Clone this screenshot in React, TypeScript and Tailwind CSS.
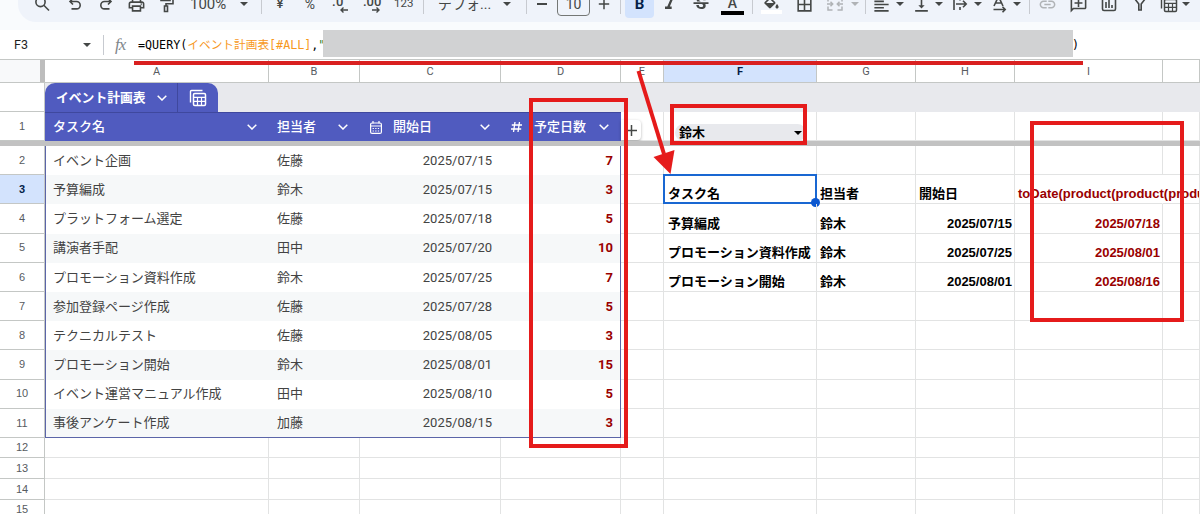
import type { ReactNode } from "react"
import clsx from "clsx"
import {
  MdBorderAll,
  MdFormatAlignLeft,
  MdFormatColorFill,
  MdFormatItalic,
  MdLink,
  MdOutlineAddComment,
  MdOutlinePrint,
  MdStrikethroughS,
  MdVerticalAlignBottom,
} from "react-icons/md"

interface Task {
  name: string
  owner: string
  start: string
  days: number
}

interface Result {
  name: string
  owner: string
  start: string
  end: string
}

const tasks: Task[] = [
  { name: "イベント企画", owner: "佐藤", start: "2025/07/15", days: 7 },
  { name: "予算編成", owner: "鈴木", start: "2025/07/15", days: 3 },
  { name: "プラットフォーム選定", owner: "佐藤", start: "2025/07/18", days: 5 },
  { name: "講演者手配", owner: "田中", start: "2025/07/20", days: 10 },
  { name: "プロモーション資料作成", owner: "鈴木", start: "2025/07/25", days: 7 },
  { name: "参加登録ページ作成", owner: "佐藤", start: "2025/07/28", days: 5 },
  { name: "テクニカルテスト", owner: "佐藤", start: "2025/08/05", days: 3 },
  { name: "プロモーション開始", owner: "鈴木", start: "2025/08/01", days: 15 },
  { name: "イベント運営マニュアル作成", owner: "田中", start: "2025/08/10", days: 5 },
  { name: "事後アンケート作成", owner: "加藤", start: "2025/08/15", days: 3 },
]

// keyed by sheet row number
const results: Record<number, Result> = {
  3: { name: "タスク名", owner: "担当者", start: "開始日", end: "toDate(product(product(product(" },
  4: { name: "予算編成", owner: "鈴木", start: "2025/07/15", end: "2025/07/18" },
  5: { name: "プロモーション資料作成", owner: "鈴木", start: "2025/07/25", end: "2025/08/01" },
  6: { name: "プロモーション開始", owner: "鈴木", start: "2025/08/01", end: "2025/08/16" },
}

const columns = [
  { id: "A", width: "w-[224px]" },
  { id: "B", width: "w-[91px]" },
  { id: "C", width: "w-[141px]" },
  { id: "D", width: "w-[120px]" },
  { id: "E", width: "w-[43px]" },
  { id: "F", width: "w-[153px]" },
  { id: "G", width: "w-[99px]" },
  { id: "H", width: "w-[99px]" },
  { id: "I", width: "w-[148px]" },
  { id: "", width: "w-[37px]" },
]

const tableFont = "font-['Roboto','Noto_Sans_CJK_JP',sans-serif]"
const sheetFont = "font-['Liberation_Sans','Noto_Sans_CJK_JP',sans-serif]"

function Icon({ className, children }: { className?: string; children: ReactNode }) {
  return (
    <svg
      viewBox="0 0 18 18"
      fill="none"
      stroke="currentColor"
      strokeWidth="1.6"
      className={clsx("size-[18px] shrink-0", className)}
    >
      {children}
    </svg>
  )
}

function Caret({ className }: { className?: string }) {
  return (
    <svg viewBox="0 0 8 4" fill="currentColor" className={clsx("h-1 w-2 shrink-0", className)}>
      <path d="M0 0h8L4 4z" />
    </svg>
  )
}

function Divider({ className }: { className?: string }) {
  return <div className={clsx("h-5 w-px shrink-0 bg-[#c7cad0]", className)} />
}

function Chevron({ className }: { className?: string }) {
  return (
    <svg viewBox="0 0 10 6" fill="none" stroke="currentColor" strokeWidth="1.5" className={clsx("h-1.5 w-2.5 shrink-0", className)}>
      <path d="M.7.7 5 5 9.3.7" />
    </svg>
  )
}

function TableIcon({ className }: { className?: string }) {
  return (
    <Icon className={className}>
      <path strokeWidth="1.4" d="M1.5 13.5v-11a1 1 0 0 1 1-1h11" />
      <rect strokeWidth="1.5" x="4.5" y="4.5" width="12" height="12" rx="1.2" />
      <path strokeWidth="1.2" d="M4.5 8.3h12M4.5 12.3h12M8.5 8.3v8.2M12.5 8.3v8.2" />
    </Icon>
  )
}

function Toolbar() {
  return (
    <div className="-mt-[14px] ml-[18px] flex h-9 shrink-0 items-center rounded-bl-[18px] bg-[#eff3fa] text-[#444746]">
      <Icon className="ml-[15px]">
        <circle cx="7.500" cy="7" r="4.600" />
        <path d="m10.800 10.300 5.200 5.200" />
      </Icon>
      <Icon className="ml-[15px]">
        <path d="M7 3.500 4 6.500l3 3M4.300 6.500h6.200a3.700 3.700 0 0 1 0 7.400H5.500" />
      </Icon>
      <Icon className="ml-[13px]">
        <path d="m11 3.500 3 3-3 3M13.700 6.500H7.500a3.700 3.700 0 0 0 0 7.400h5" />
      </Icon>
      <MdOutlinePrint className="ml-[12px] size-[19px] shrink-0" />
      <Icon className="ml-[11px]">
        <path d="M4 1.500h9v4H4zM13 3.500h3v5.200H9V11M7.500 11h3v5.500h-3z" />
      </Icon>
      <span className="ml-[15px] w-[38px] shrink-0 whitespace-nowrap font-['Roboto',sans-serif] text-[15px]">100%</span>
      <Caret className="ml-[12px]" />
      <Divider className="ml-[13px]" />
      <span className="ml-[9px] w-[18px] shrink-0 text-center font-['Roboto','Noto_Sans_CJK_JP',sans-serif] text-[13px] font-medium">¥</span>
      <span className="ml-[12px] w-[18px] shrink-0 text-center font-['Roboto',sans-serif] text-[14px]">%</span>
      <div className="ml-[13px] flex w-[18px] shrink-0 flex-col font-['Roboto',sans-serif] text-[13px] leading-[12px] font-medium tracking-[.5px]">
        <span>.0</span>
        <svg viewBox="0 0 8 6" fill="none" stroke="currentColor" strokeWidth="1.4" className="-mt-px ml-2 h-1.5 w-2">
          <path d="M8 3H1M3.500.5 1 3l2.500 2.500" />
        </svg>
      </div>
      <div className="ml-[13px] flex w-[20px] shrink-0 flex-col font-['Roboto',sans-serif] text-[13px] leading-[12px] font-medium">
        <span>.00</span>
        <svg viewBox="0 0 8 6" fill="none" stroke="currentColor" strokeWidth="1.4" className="-mt-px ml-[9px] h-1.5 w-2">
          <path d="M0 3h7M4.500.5 7 3 4.500 5.500" />
        </svg>
      </div>
      <span className="ml-[11px] w-[19px] shrink-0 font-['Roboto',sans-serif] text-[11.500px]">123</span>
      <Divider className="ml-[10px]" />
      <span className="ml-[14px] w-[54px] shrink-0 whitespace-nowrap font-['Roboto','Noto_Sans_CJK_JP',sans-serif] text-[14px]">デフォ...</span>
      <Caret className="ml-[11px]" />
      <Divider className="ml-[15px]" />
      <div className="ml-[10px] h-[1.5px] w-2.5 shrink-0 bg-[#444746]" />
      <div className="ml-[10px] flex h-6 w-[33px] shrink-0 items-center justify-center rounded border border-[#747775] font-['Roboto',sans-serif] text-[14px]">
        10
      </div>
      <svg viewBox="0 0 12 12" stroke="currentColor" strokeWidth="1.5" className="ml-[8px] size-3 shrink-0">
        <path d="M6 .8v10.400M.8 6h10.400" />
      </svg>
      <Divider className="ml-[10px]" />
      <div className="ml-[4px] flex h-7 w-[29px] shrink-0 items-center justify-center rounded bg-[#d3e3fd] font-['Roboto',sans-serif] text-[15px] font-bold text-[#041e49]">
        B
      </div>
      <MdFormatItalic className="ml-[6px] size-[20px] shrink-0" />
      <MdStrikethroughS className="ml-[11px] size-[20px] shrink-0" />
      <div className="mt-[3px] ml-[10px] flex w-[23px] shrink-0 flex-col items-center font-['Roboto',sans-serif] text-[14px] leading-[14px] font-medium">
        A
        <div className="mt-px h-1 w-full bg-black" />
      </div>
      <Divider className="ml-[8px]" />
      <div className="ml-[8px] flex w-[21px] shrink-0 flex-col items-center">
        <MdFormatColorFill className="-mb-[4px] size-[19px]" />
        <div className="h-1 w-full bg-white" />
      </div>
      <MdBorderAll className="ml-[13px] size-[19px] shrink-0" />
      <Icon className="ml-[12px] text-[#b0b3b6]">
        <path strokeWidth="1.5" d="M6.500 3H2v3.500M11.500 3H16v3.500M6.500 15H2v-3.500M11.500 15H16v-3.500M1 9h5.500M4.500 6.800 6.700 9l-2.200 2.200M17 9h-5.500M13.500 6.800 11.300 9l2.200 2.200" />
      </Icon>
      <Caret className="ml-[7px] text-[#b0b3b6]" />
      <Divider className="ml-[6px]" />
      <MdFormatAlignLeft className="ml-[6px] size-[19px] shrink-0" />
      <Caret className="ml-[5px]" />
      <MdVerticalAlignBottom className="ml-[8px] size-[19px] shrink-0" />
      <Caret className="ml-[4px]" />
      <Icon className="ml-[8px]">
        <path d="M3 2v13M9 2v3.500M9 12v3M5 9h10M12 5.800 15.200 9 12 12.200" />
      </Icon>
      <Caret className="ml-[5px]" />
      <Icon className="ml-[9px]">
        <path d="M3 11 7.500 1.500 12 11M4.500 8h6M2.500 14.500h11M11.500 11.800l2.700 2.700-2.700 2.700" />
      </Icon>
      <Caret className="ml-[4px]" />
      <Divider className="ml-[8px]" />
      <MdLink className="ml-[8px] size-[19px] shrink-0 text-[#b0b3b6]" />
      <MdOutlineAddComment className="ml-[12px] size-[19px] shrink-0 -scale-x-100" />
      <Icon className="ml-[12px]">
        <rect x="2.500" y="2.500" width="13" height="13" rx="1.500" />
        <path d="M6 7v6M9 5v8M12 10v3" />
      </Icon>
      <Icon className="ml-[13px]">
        <path d="M3 2.800h12L10.200 9v6H7.800V9z" />
      </Icon>
      <TableIcon className="ml-[11px]" />
      <Caret className="ml-[4px]" />
    </div>
  )
}

function FormulaBar() {
  return (
    <div className="mt-2 flex h-[30px] shrink-0 items-center border-b border-[#c4c7c5] bg-white">
      <span className="mt-px ml-[14px] w-[69px] font-['Roboto',sans-serif] text-[12.500px] text-[#1f1f1f]">F3</span>
      <Caret className="text-[#444746]" />
      <Divider className="ml-[12px] h-4" />
      <span className="mt-px ml-[11px] w-[23px] font-['Liberation_Serif',serif] text-[17px] tracking-[-1px] text-[#80868b] italic">fx</span>
      <div className="flex h-[27px] items-center self-start whitespace-pre font-['DejaVu_Sans_Mono','Noto_Sans_CJK_JP',monospace] text-[11.700px] text-black">
        <div className="mt-[5px] flex w-[185px] overflow-hidden">
          <span>=QUERY(</span>
          <span className="text-[#f7981d]">イベント計画表[#ALL]</span>
          <span>,</span>
          <span className="text-[#188038]">"</span>
        </div>
        <div className="h-full w-[750px] bg-[#d1d2d3]" />
        <span className="mt-[5px] -ml-px">)</span>
      </div>
    </div>
  )
}

function ColumnHeaders() {
  return (
    <div className="flex h-[23px] shrink-0 border-b border-[#c4c7c5]">
      <div className="w-[45px] shrink-0 border-r-[5px] border-[#bdbdbd] bg-[#f8f9fa]" />
      {columns.map((col, index) => (
        <div
          key={index}
          className={clsx(
            "flex shrink-0 items-center justify-center border-r border-[#c4c7c5] pt-0.5 font-['Roboto',sans-serif] text-[11px]",
            col.width,
            col.id === "F" ? "bg-[#d3e3fd] font-bold text-[#041e49]" : "text-[#575b5f]"
          )}
        >
          {col.id}
        </div>
      ))}
    </div>
  )
}

function RowHeader({ row, active }: { row?: number; active?: boolean }) {
  return (
    <div
      className={clsx(
        "flex w-[45px] shrink-0 items-center justify-center border-r border-b border-[#c4c7c5] font-['Liberation_Sans',sans-serif] text-[11px]",
        active ? "bg-[#d3e3fd] font-bold text-[#041e49]" : "text-[#575b5f]"
      )}
    >
      {row}
    </div>
  )
}

function GridCell({ width, className, children }: { width: string; className?: string; children?: ReactNode }) {
  return <div className={clsx("shrink-0 border-r border-b border-[#e2e3e3]", width, className)}>{children}</div>
}

function TableTitle() {
  return (
    <div className="flex h-[29px] shrink-0">
      <RowHeader />
      <div className="flex flex-1 bg-[#e8e9ed]">
        <div className={clsx("flex w-[173px] rounded-t-[10px] bg-[#505bbf] text-[12.800px] font-bold text-white", tableFont)}>
          <div className="flex w-[133px] items-center border-r border-[#3f489e] pl-[11px]">
            イベント計画表
            <Chevron className="ml-[11px]" />
          </div>
          <div className="flex flex-1 items-center justify-center">
            <TableIcon className="size-[17px]" />
          </div>
        </div>
      </div>
    </div>
  )
}

function TableHeader() {
  return (
    <div className="flex h-[29px] shrink-0">
      <RowHeader row={1} />
      <div className={clsx("flex w-[576px] shrink-0 items-center border-t border-[#3f489e] bg-[#505bbf] text-[13px] font-medium text-white", tableFont)}>
        <div className="flex w-[224px] items-center justify-between pr-[12px] pl-2">
          タスク名
          <Chevron />
        </div>
        <div className="flex w-[91px] items-center justify-between pr-[12px] pl-2">
          担当者
          <Chevron />
        </div>
        <div className="flex w-[141px] items-center pr-[11px] pl-[10px]">
          <svg viewBox="0 0 12 13" fill="none" stroke="currentColor" strokeWidth="1.200" className="mr-[11px] h-[13px] w-3">
            <rect x=".6" y="2" width="10.800" height="10.400" rx="1.500" />
            <path d="M3 0v2.500M9 0v2.500M.6 5h10.800" />
            <path strokeDasharray="1.300 1.300" d="M2.600 7.500h7M2.600 10h7" />
          </svg>
          開始日
          <Chevron className="ml-auto" />
        </div>
        <div className="flex w-[120px] items-center pr-[12px] pl-[10px]">
          <svg viewBox="0 0 11 10" fill="none" stroke="currentColor" strokeWidth="1.300" className="mr-[12px] h-2.5 w-[11px]">
            <path d="M4 0 2.500 10M8.500 0 7 10M.8 3H11M0 7h10.200" />
          </svg>
          予定日数
          <Chevron className="ml-auto" />
        </div>
      </div>
      <GridCell width="w-[43px]">
        <div className="mt-2 flex h-[20px] w-5 items-center justify-center rounded-r bg-white text-[#444746] shadow-[0_1px_3px_rgba(0,0,0,0.3)]">
          <svg viewBox="0 0 11 11" stroke="currentColor" strokeWidth="1.500" className="size-[11px]">
            <path d="M5.500 0v11M0 5.500h11" />
          </svg>
        </div>
      </GridCell>
      <GridCell width="w-[153px]" className="flex items-end pl-[11px]">
        <div className={clsx("-mb-px flex h-[17px] w-[131px] items-center justify-between rounded-full bg-[#e8e9ed] pr-1 pl-1 text-[13px] leading-[17px] font-bold text-black", sheetFont)}>
          鈴木
          <Caret />
        </div>
      </GridCell>
      {columns.slice(6).map((col, index) => (
        <GridCell key={index} width={col.width} />
      ))}
    </div>
  )
}

function TaskRow({ task, row }: { task: Task; row: number }) {
  const result = results[row]
  const isHeading = row === 3

  return (
    <div className="flex h-[29.200px] shrink-0">
      <RowHeader row={row} active={row === 3} />
      <div
        className={clsx(
          "flex w-[576px] shrink-0 items-center border-x border-[#5b65a8] text-[13px] text-[#434343]",
          tableFont,
          row % 2 === 1 && "bg-[#f6f8f9]",
          row === 11 && "border-b"
        )}
      >
        <div className="w-[223px] pl-[7px]">{task.name}</div>
        <div className="w-[91px] pl-2">{task.owner}</div>
        <div className="w-[141px] pr-[9px] text-right">{task.start}</div>
        <div className="flex-1 pr-[7px] text-right font-bold text-[#990000]">{task.days}</div>
      </div>
      <GridCell width="w-[43px]" />
      <div className={clsx("flex shrink-0 text-[13px] leading-[18px] font-bold text-black", sheetFont)}>
        <GridCell width="w-[153px]" className="relative flex items-end whitespace-nowrap pl-[4px]">
          {result?.name}
          {isHeading && (
            <div className="absolute -top-px -right-px -bottom-px -left-px border-2 border-[#1967d2]">
              <div className="absolute -right-[5px] -bottom-[5px] size-[9px] rounded-full bg-[#0b57d0]" />
            </div>
          )}
        </GridCell>
        <GridCell width="w-[99px]" className="flex items-end pl-[3px]">
          {result?.owner}
        </GridCell>
        <GridCell width="w-[99px]" className={clsx("flex items-end pr-[2px] pl-[3px]", !isHeading && "justify-end")}>
          {result?.start}
        </GridCell>
        <GridCell
          width="w-[148px]"
          className={clsx("flex items-end pr-[2px] pl-[3px] whitespace-nowrap text-[#990000]", isHeading ? "border-r-transparent" : "justify-end")}
        >
          {result?.end}
        </GridCell>
        <GridCell width="w-[37px]" />
      </div>
    </div>
  )
}

function Annotations() {
  return (
    <div className="pointer-events-none absolute inset-0">
      <div className="absolute top-[61px] left-[134px] h-1 w-[949px] bg-[#d92020]" />
      <div className="absolute top-[98px] left-[529px] h-[350px] w-[99px] border-[4.500px] border-[#e51b1b]" />
      <div className="absolute top-[104px] left-[670px] h-[41px] w-[137px] border-4 border-[#e51b1b]" />
      <div className="absolute top-[121px] left-[1030px] h-[201px] w-[154px] border-4 border-[#e51b1b]" />
      <svg viewBox="0 0 40 105" className="absolute top-[70px] left-[636px] h-[105px] w-10">
        <path d="M2.500 1 28 84" stroke="#e51b1b" strokeWidth="4" />
        <path d="M17.500 87 38.500 80 34.500 104z" fill="#e51b1b" />
      </svg>
    </div>
  )
}

export default function App() {
  return (
    <div className="relative flex h-[514px] w-[1200px] flex-col overflow-hidden bg-[#f9fbfd]">
      <Toolbar />
      <FormulaBar />
      <div className="flex flex-1 flex-col bg-white">
        <ColumnHeaders />
        <TableTitle />
        <TableHeader />
        {/* frozen row separator */}
        <div className="h-[5px] shrink-0 bg-[#c2c2c2]" />
        {tasks.map((task, index) => (
          <TaskRow key={task.name} task={task} row={index + 2} />
        ))}
        {[12, 13, 14, 15].map((row) => (
          <div key={row} className="flex h-[20.600px] shrink-0">
            <RowHeader row={row} />
            {columns.map((col, index) => (
              <GridCell key={index} width={col.width} />
            ))}
          </div>
        ))}
      </div>
      <Annotations />
    </div>
  )
}
